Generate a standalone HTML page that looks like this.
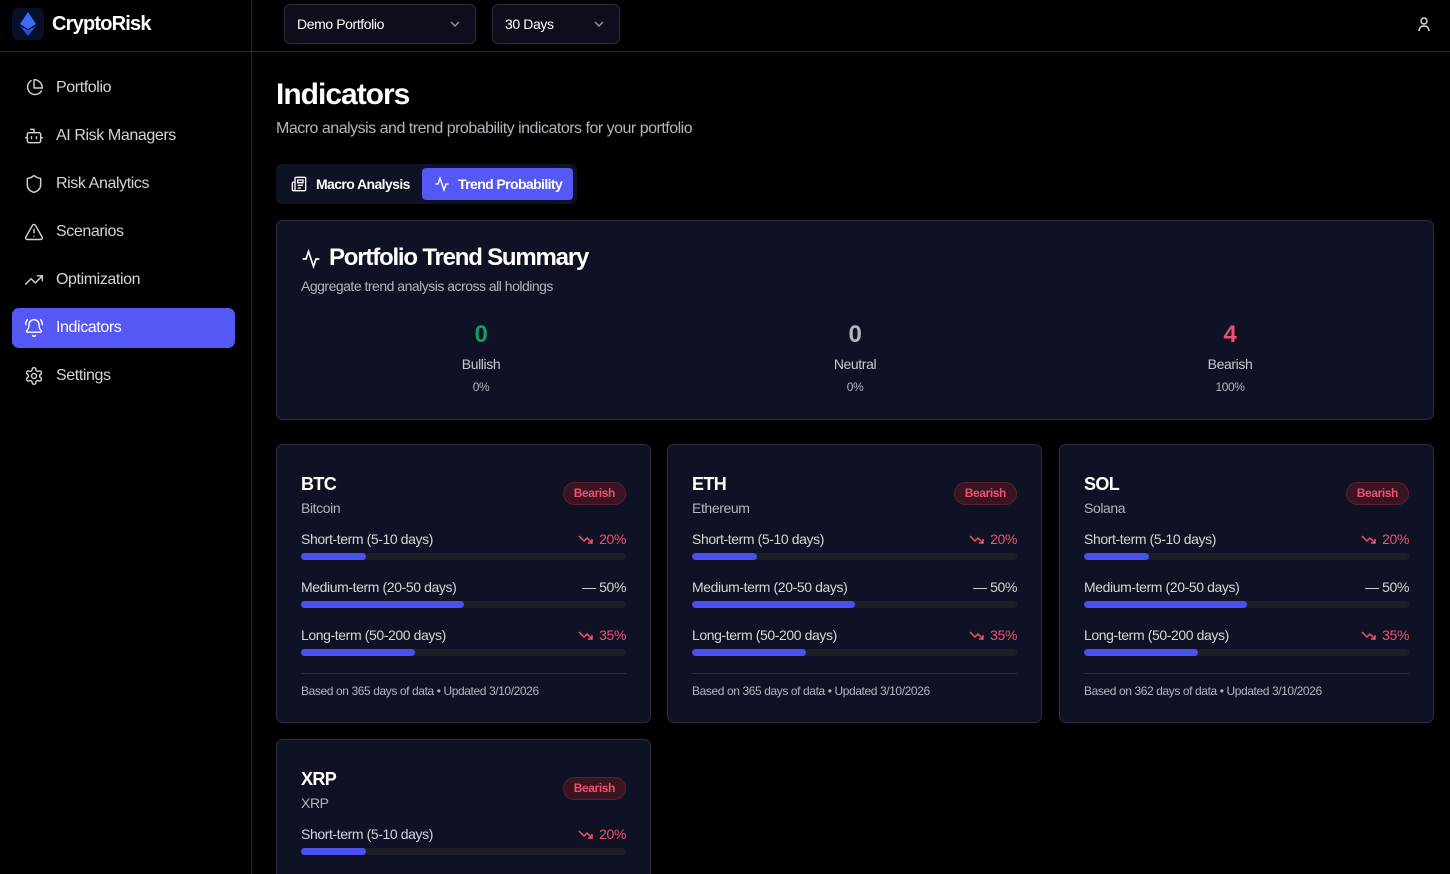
<!DOCTYPE html>
<html style="height:874px;overflow:hidden"><head><meta charset="utf-8"><style>
*{box-sizing:border-box;margin:0;padding:0}
body{width:1450px;height:874px;background:#000;color:#fff;font-family:"Liberation Sans",sans-serif;overflow:hidden;position:relative;letter-spacing:-0.4px}
.abs{position:absolute}
.side{left:0;top:0;width:252px;height:874px;border-right:1px solid #2a2a2e}
.topline{left:0;top:51px;width:1450px;height:1px;background:#2a2a2e}
.nav{position:absolute;left:12px;width:223px;height:40px;border-radius:7px;display:flex;align-items:center;padding-left:12px;font-size:16px;color:#d4d4d8}
.nav svg{width:20px;height:20px;margin-right:12px;fill:none;stroke:#d4d4d8;stroke-width:1.7;stroke-linecap:round;stroke-linejoin:round}
.nav.act{background:#5558f5;color:#fff}
.nav.act svg{stroke:#fff}
.sel{top:4px;height:40px;border:1px solid #2a2d3a;background:#0c0e1c;border-radius:6px;font-size:14px;display:flex;align-items:center;padding-left:12px}
.sel svg{position:absolute;right:14px;top:15px}
.card{position:absolute;background:#0f1224;border:1px solid #2c2f3d;border-radius:7px;overflow:hidden}
.coin{position:absolute;width:375px;height:279px}
.coin h3{position:absolute;left:24px;top:29px;font-size:18px;font-weight:bold;letter-spacing:-0.6px}
.coin .nm{position:absolute;left:24px;top:55px;font-size:14px;color:#b4b4bc}
.badge{position:absolute;right:24px;top:37px;height:23px;padding:0 10px;border-radius:12px;background:#3a1420;border:1px solid #5a2030;color:#f0506e;font-size:12px;font-weight:bold;line-height:21px}
.row{position:absolute;left:24px;right:24px;font-size:14px;color:#d4d4d8}
.row .v{position:absolute;right:0;top:0;color:#f0506e;display:flex;align-items:center;gap:5px}
.row .v.n{color:#d4d4d8}
.track{position:absolute;left:0;right:0;top:22px;height:7px;border-radius:4px;background:#1e1f26}
.fill{height:7px;border-radius:4px;background:#4b4ff0}
.foot{position:absolute;left:24px;right:24px;top:228px;border-top:1px solid #2c2f3d;padding-top:10px;font-size:12px;color:#b4b4bc}
.stat{position:absolute;text-align:center;width:200px}
.stat b{display:block;font-size:24px}
.stat .l{display:block;font-size:14px;color:#c8c8d0;margin-top:7px}
.stat .p{display:block;font-size:12px;color:#b4b4bc;margin-top:8px}
</style></head><body>
<div class="abs side"></div>
<div class="abs topline"></div>
<div class="abs" style="left:12px;top:8px;width:32px;height:32px;border-radius:6px;background:#07102a"></div>
<svg class="abs" style="left:18px;top:11px" width="20" height="26" viewBox="0 0 20 26"><path d="M10 1L2 13l8 5 8-5z" fill="#3a6cf5"/><path d="M10 19l-8-4 8 10 8-10z" fill="#2a50d0"/></svg>
<div class="abs" style="left:52px;top:13px;font-size:20px;font-weight:bold;letter-spacing:-0.8px">CryptoRisk</div>
<div class="abs sel" style="left:284px;width:192px">Demo Portfolio<svg width="12" height="8" viewBox="0 0 12 8"><path d="M2 2l4 4 4-4" stroke="#999" fill="none" stroke-width="1.4"/></svg></div>
<div class="abs sel" style="left:492px;width:128px">30 Days<svg width="12" height="8" viewBox="0 0 12 8"><path d="M2 2l4 4 4-4" stroke="#999" fill="none" stroke-width="1.4"/></svg></div>
<svg class="abs" style="left:1416px;top:16px" width="16" height="16" viewBox="0 0 16 16" fill="none" stroke="#ddd" stroke-width="1.4"><circle cx="8" cy="5" r="3"/><path d="M3 15c0-3 2-5 5-5s5 2 5 5"/></svg>

<div class="nav" style="top:68px"><svg viewBox="0 0 24 24"><path d="M21 15.5A9 9 0 1 1 8.5 3.2"/><path d="M22 12A10 10 0 0 0 12 2v10z"/></svg>Portfolio</div>
<div class="nav" style="top:116px"><svg viewBox="0 0 24 24"><path d="M12 8V4H8"/><rect x="4" y="8" width="16" height="12" rx="2"/><path d="M2 14h2M20 14h2M15 13v2M9 13v2"/></svg>AI Risk Managers</div>
<div class="nav" style="top:164px"><svg viewBox="0 0 24 24"><path d="M20 13c0 5-3.5 7.5-7.7 9a1 1 0 0 1-.6 0C7.5 20.5 4 18 4 13V6a1 1 0 0 1 1-1c2 0 4.5-1.2 6.2-2.7a1.2 1.2 0 0 1 1.5 0C14.5 3.8 17 5 19 5a1 1 0 0 1 1 1z"/></svg>Risk Analytics</div>
<div class="nav" style="top:212px"><svg viewBox="0 0 24 24"><path d="M21.7 18l-8-14a2 2 0 0 0-3.5 0l-8 14A2 2 0 0 0 4 21h16a2 2 0 0 0 1.7-3z"/><path d="M12 9v4M12 17h.01"/></svg>Scenarios</div>
<div class="nav" style="top:260px"><svg viewBox="0 0 24 24"><path d="M22 7l-8.5 8.5-5-5L2 17"/><path d="M16 7h6v6"/></svg>Optimization</div>
<div class="nav act" style="top:308px"><svg viewBox="0 0 24 24"><path d="M10.3 21a1.9 1.9 0 0 0 3.4 0"/><path d="M22 8c0-2.3-.8-4.3-2-6M3.3 15.3A1 1 0 0 0 4 17h16a1 1 0 0 0 .7-1.7C19.4 14 18 12.6 18 8A6 6 0 0 0 6 8c0 4.6-1.4 6-2.7 7.3M4 2C2.8 3.7 2 5.7 2 8"/></svg>Indicators</div>
<div class="nav" style="top:356px"><svg viewBox="0 0 24 24"><path d="M12.2 2h-.4a2 2 0 0 0-2 2v.2a2 2 0 0 1-1 1.7l-.4.3a2 2 0 0 1-2 0l-.2-.1a2 2 0 0 0-2.7.7l-.2.4a2 2 0 0 0 .7 2.7l.2.1a2 2 0 0 1 1 1.7v.5a2 2 0 0 1-1 1.7l-.2.1a2 2 0 0 0-.7 2.7l.2.4a2 2 0 0 0 2.7.7l.2-.1a2 2 0 0 1 2 0l.4.3a2 2 0 0 1 1 1.7v.2a2 2 0 0 0 2 2h.4a2 2 0 0 0 2-2v-.2a2 2 0 0 1 1-1.7l.4-.3a2 2 0 0 1 2 0l.2.1a2 2 0 0 0 2.7-.7l.2-.4a2 2 0 0 0-.7-2.7l-.2-.1a2 2 0 0 1-1-1.7v-.5a2 2 0 0 1 1-1.7l.2-.1a2 2 0 0 0 .7-2.7l-.2-.4a2 2 0 0 0-2.7-.7l-.2.1a2 2 0 0 1-2 0l-.4-.3a2 2 0 0 1-1-1.7V4a2 2 0 0 0-2-2z"/><circle cx="12" cy="12" r="3"/></svg>Settings</div>

<div class="abs" style="left:276px;top:78px;font-size:30px;font-weight:bold;letter-spacing:-1px">Indicators</div>
<div class="abs" style="left:276px;top:120px;font-size:16px;color:#b4b4bc;letter-spacing:-0.5px">Macro analysis and trend probability indicators for your portfolio</div>

<div class="abs" style="left:276px;top:164px;width:301px;height:40px;border-radius:6px;background:#0f1224"></div>
<svg class="abs" style="left:291px;top:176px" width="16" height="16" viewBox="0 0 24 24" fill="none" stroke="#fff" stroke-width="2"><path d="M4 22h16a2 2 0 0 0 2-2V4a2 2 0 0 0-2-2H8a2 2 0 0 0-2 2v16a2 2 0 0 1-4 0V11c0-1.1.9-2 2-2h2"/><path d="M18 14h-8M15 18h-5M10 6h8v4h-8z"/></svg>
<div class="abs" style="left:316px;top:176px;font-size:14px;font-weight:bold;letter-spacing:-0.6px">Macro Analysis</div>
<div class="abs" style="left:422px;top:168px;width:151px;height:32px;border-radius:4px;background:#5558f5"></div>
<svg class="abs" style="left:434px;top:176px" width="16" height="16" viewBox="0 0 24 24" fill="none" stroke="#fff" stroke-width="2"><path d="M22 12h-4l-3 9L9 3l-3 9H2"/></svg>
<div class="abs" style="left:458px;top:176px;font-size:14px;font-weight:bold;letter-spacing:-0.6px">Trend Probability</div>

<div class="card" style="left:276px;top:220px;width:1158px;height:200px">
<svg class="abs" style="left:24px;top:28px" width="20" height="20" viewBox="0 0 24 24" fill="none" stroke="#fff" stroke-width="2"><path d="M22 12h-4l-3 9L9 3l-3 9H2"/></svg>
<div class="abs" style="left:52px;top:23px;font-size:24px;font-weight:bold;letter-spacing:-1.2px">Portfolio Trend Summary</div>
<div class="abs" style="left:24px;top:57px;font-size:14px;color:#b4b4bc;letter-spacing:-0.5px">Aggregate trend analysis across all holdings</div>
<div class="stat" style="left:104px;top:100px"><b style="color:#159a6c">0</b><span class="l">Bullish</span><span class="p">0%</span></div>
<div class="stat" style="left:478px;top:100px"><b style="color:#b4b4bc">0</b><span class="l">Neutral</span><span class="p">0%</span></div>
<div class="stat" style="left:853px;top:100px"><b style="color:#f0506e">4</b><span class="l">Bearish</span><span class="p">100%</span></div>
</div>

<div class="card coin" style="left:276px;top:444px">
<h3>BTC</h3><div class="nm">Bitcoin</div><div class="badge">Bearish</div>
<div class="row" style="top:86px">Short-term (5-10 days)<span class="v"><svg width="16" height="10" viewBox="0 0 16 10" fill="none" stroke="#f0506e" stroke-width="1.5"><path d="M1 2l5 5 3-3 5 5M10 9h4V5"/></svg>20%</span><div class="track"><div class="fill" style="width:20%"></div></div></div>
<div class="row" style="top:134px">Medium-term (20-50 days)<span class="v n">—&nbsp;50%</span><div class="track"><div class="fill" style="width:50%"></div></div></div>
<div class="row" style="top:182px">Long-term (50-200 days)<span class="v"><svg width="16" height="10" viewBox="0 0 16 10" fill="none" stroke="#f0506e" stroke-width="1.5"><path d="M1 2l5 5 3-3 5 5M10 9h4V5"/></svg>35%</span><div class="track"><div class="fill" style="width:35%"></div></div></div>
<div class="foot">Based on 365 days of data • Updated 3/10/2026</div>
</div>
<div class="card coin" style="left:667px;top:444px">
<h3>ETH</h3><div class="nm">Ethereum</div><div class="badge">Bearish</div>
<div class="row" style="top:86px">Short-term (5-10 days)<span class="v"><svg width="16" height="10" viewBox="0 0 16 10" fill="none" stroke="#f0506e" stroke-width="1.5"><path d="M1 2l5 5 3-3 5 5M10 9h4V5"/></svg>20%</span><div class="track"><div class="fill" style="width:20%"></div></div></div>
<div class="row" style="top:134px">Medium-term (20-50 days)<span class="v n">—&nbsp;50%</span><div class="track"><div class="fill" style="width:50%"></div></div></div>
<div class="row" style="top:182px">Long-term (50-200 days)<span class="v"><svg width="16" height="10" viewBox="0 0 16 10" fill="none" stroke="#f0506e" stroke-width="1.5"><path d="M1 2l5 5 3-3 5 5M10 9h4V5"/></svg>35%</span><div class="track"><div class="fill" style="width:35%"></div></div></div>
<div class="foot">Based on 365 days of data • Updated 3/10/2026</div>
</div>
<div class="card coin" style="left:1059px;top:444px">
<h3>SOL</h3><div class="nm">Solana</div><div class="badge">Bearish</div>
<div class="row" style="top:86px">Short-term (5-10 days)<span class="v"><svg width="16" height="10" viewBox="0 0 16 10" fill="none" stroke="#f0506e" stroke-width="1.5"><path d="M1 2l5 5 3-3 5 5M10 9h4V5"/></svg>20%</span><div class="track"><div class="fill" style="width:20%"></div></div></div>
<div class="row" style="top:134px">Medium-term (20-50 days)<span class="v n">—&nbsp;50%</span><div class="track"><div class="fill" style="width:50%"></div></div></div>
<div class="row" style="top:182px">Long-term (50-200 days)<span class="v"><svg width="16" height="10" viewBox="0 0 16 10" fill="none" stroke="#f0506e" stroke-width="1.5"><path d="M1 2l5 5 3-3 5 5M10 9h4V5"/></svg>35%</span><div class="track"><div class="fill" style="width:35%"></div></div></div>
<div class="foot">Based on 362 days of data • Updated 3/10/2026</div>
</div>
<div class="card coin" style="left:276px;top:739px;height:140px">
<h3>XRP</h3><div class="nm">XRP</div><div class="badge">Bearish</div>
<div class="row" style="top:86px">Short-term (5-10 days)<span class="v"><svg width="16" height="10" viewBox="0 0 16 10" fill="none" stroke="#f0506e" stroke-width="1.5"><path d="M1 2l5 5 3-3 5 5M10 9h4V5"/></svg>20%</span><div class="track"><div class="fill" style="width:20%"></div></div></div>
</div>
</body></html>
